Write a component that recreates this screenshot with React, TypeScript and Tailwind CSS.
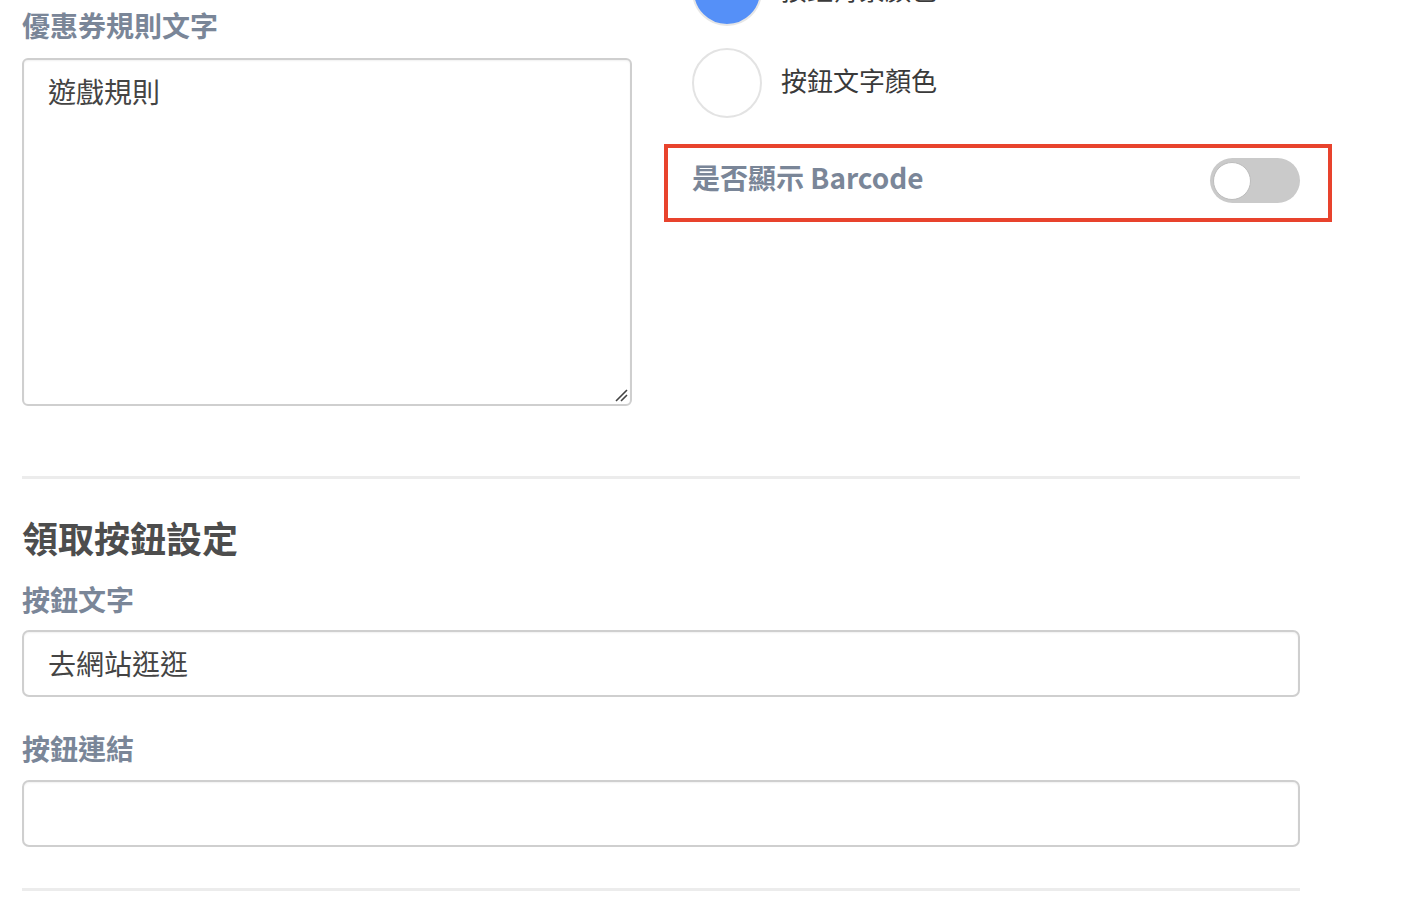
import React from "react";

const font = { fontFamily: '"Noto Sans CJK TC", "Noto Sans", "Liberation Sans", sans-serif' };

function Label({ children }: { children: React.ReactNode }) {
  return (
    <div className="text-[28px] leading-[34px] font-bold text-[#7a8698]">{children}</div>
  );
}

function TextInput({ value }: { value: string }) {
  return (
    <div className="h-[67px] w-full rounded-[7px] border-2 border-[#cfcfcf] shadow-[inset_0_1px_2px_rgba(0,0,0,0.06)] flex items-center pl-[24px] pb-[2px] text-[28px] text-[#444]">
      {value}
    </div>
  );
}

function ColorRow({ color, label, bordered, raised }: { color: string; label: string; bordered?: boolean; raised?: boolean }) {
  return (
    <div className="flex items-center gap-[19px] pl-[28px]">
      <div
        className={`h-[70px] w-[70px] rounded-full border-2 ${bordered ? "border-[#e3e3e3]" : "border-[#e6e6e6]"}`}
        style={{ backgroundColor: color }}
      />
      <div className={`${raised ? "pb-[6px]" : "pb-[4px]"} text-[26px] leading-[34px] text-[#3a3a3a]`}>{label}</div>
    </div>
  );
}

export default function App() {
  return (
    <div className="w-[1402px] h-[918px] overflow-hidden bg-white" style={font}>
      <div className="w-[1310px] pl-[22px]">
        <div className="flex items-start gap-[32px]">
          <div className="w-[610px] shrink-0 pt-[8px]">
            <Label>優惠券規則文字</Label>
            <div className="relative mt-[16px] h-[348px] rounded-[6px] border-2 border-[#cfcfcf] shadow-[inset_0_1px_2px_rgba(0,0,0,0.06)] pl-[24px] pt-[11px] text-[28px] leading-[40px] text-[#444]">
              遊戲規則
              <svg className="absolute right-[2px] bottom-[2px]" width="14" height="14" viewBox="0 0 14 14">
                <path d="M2 13 L13 2 M7 13 L13 7" stroke="#444" strokeWidth="1.6" />
              </svg>
            </div>
          </div>
          <div className="w-[668px] shrink-0 -mt-[44px] flex flex-col">
            <ColorRow color="#5590f8" label="按鈕背景顏色" />
            <div className="h-[22px]" />
            <ColorRow color="#ffffff" label="按鈕文字顏色" bordered raised />
            <div className="mt-[26px] h-[78px] border-[4px] border-[#e8432d] flex items-start justify-between pl-[24px] pr-[28px] pt-[10px]">
              <div className="mt-[2px] text-[28px] leading-[34px] font-bold text-[#7a8698]">是否顯示 Barcode</div>
              <div className="h-[45px] w-[90px] rounded-full bg-[#cacaca] flex items-center pl-[3px]">
                <div className="h-[38px] w-[38px] rounded-full bg-white border border-[#bdbdbd]" />
              </div>
            </div>
          </div>
        </div>

        <div className="w-[1278px]">
          <div className="mt-[70px] h-[3px] bg-[#ececec]" />
          <div className="mt-[36px] text-[36px] leading-[44px] font-bold text-[#4d4d4d]">領取按鈕設定</div>
          <div className="mt-[23px]">
            <Label>按鈕文字</Label>
          </div>
          <div className="mt-[14px]">
            <TextInput value="去網站逛逛" />
          </div>
          <div className="mt-[34px]">
            <Label>按鈕連結</Label>
          </div>
          <div className="mt-[15px]">
            <TextInput value="" />
          </div>
          <div className="mt-[41px] h-[3px] bg-[#ececec]" />
        </div>
      </div>
    </div>
  );
}
